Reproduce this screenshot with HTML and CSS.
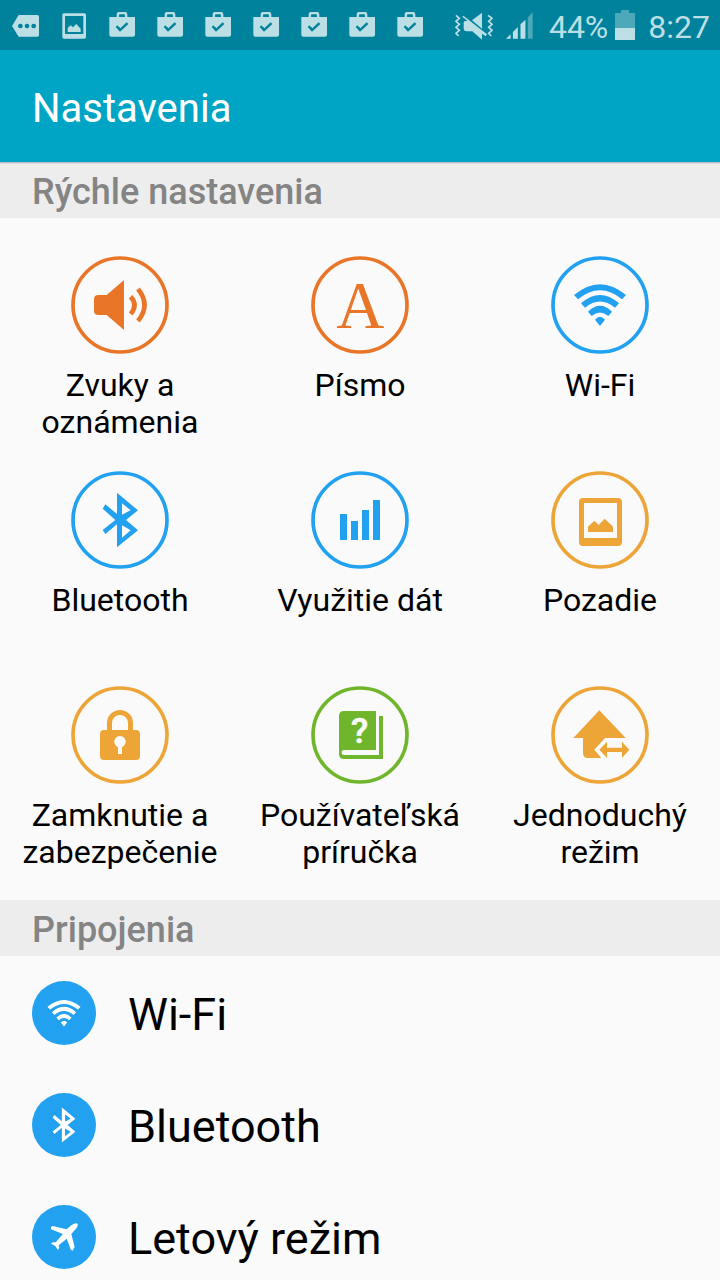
FILE: index.html
```html
<!DOCTYPE html>
<html lang="sk">
<head>
<meta charset="utf-8">
<meta name="viewport" content="width=device-width, initial-scale=1">
<title>Nastavenia</title>
<link rel="stylesheet" href="styles.css">
</head>
<body>
<svg class="symbols" aria-hidden="true">
  <symbol id="bag" viewBox="0 0 144 150">
    <path fill-rule="evenodd" d="M34 51H56V43Q56 36 63 36H81Q88 36 88 43V51H111V104Q111 110 105 110H40Q34 110 34 104ZM63 51H81V46Q81 43 78 43H66Q63 43 63 46ZM53 81L66 95L91 72L86 67L67 85L58 76Z"/>
  </symbol>
  <symbol id="wifi" viewBox="100 110 160 132">
    <path d="M102 147Q180 82 258 147L246 160Q180 106 114 160ZM123 172Q180 122 237 172L225 185Q180 148 135 185ZM144 197Q180 162 216 197L205 210Q180 189 155 210ZM165 221Q180 203 195 221L180 240Z"/>
  </symbol>
  <symbol id="bluetooth" viewBox="126 96 110 168">
    <path fill-rule="evenodd" d="M171 98L234 151L198 180L234 211L171 262V193L136 222L128 210L166 180L128 146L136 133L171 162ZM186 130V164L212 151ZM186 196V233L212 211Z"/>
  </symbol>
  <symbol id="plane" viewBox="90 755 86 92">
    <path d="M173 760Q176 765 168 776L154 792L164 832L158 843L152 839L140 806L115 826L117 834L113 841L104 828L91 822L97 817L106 817L128 792L92 777L91 771L97 767L139 777L155 764Q167 756 173 760Z"/>
  </symbol>
</svg>
<div class="screen">
  <div class="status">
    <div class="notifications">
      <svg class="note" viewBox="0 0 144 150"><path fill-rule="evenodd" d="M50 45H106Q111 45 111 50V105Q111 110 106 110H50L30 78ZM55 71a7 7 0 1 0 .1 0ZM75 71a7 7 0 1 0 .1 0ZM95 71a7 7 0 1 0 .1 0Z"/></svg>
      <svg class="note" viewBox="0 0 144 150"><path fill-rule="evenodd" d="M42 40H103Q108 40 108 45V111Q108 116 103 116H42Q37 116 37 111V45Q37 40 42 40ZM45 48V102H100V48ZM53 96V84L62 76L69 82L79 72L92 86V96Z"/></svg>
      <svg class="note"><use href="#bag"/></svg>
      <svg class="note"><use href="#bag"/></svg>
      <svg class="note"><use href="#bag"/></svg>
      <svg class="note"><use href="#bag"/></svg>
      <svg class="note"><use href="#bag"/></svg>
      <svg class="note"><use href="#bag"/></svg>
      <svg class="note"><use href="#bag"/></svg>
    </div>
    <div class="system">
      <svg class="mute" viewBox="45 0 114 150"><path d="M126 38V86L96 61ZM73 64L82 62L67 50L70 47L141 103L137 109L126 101V119L97 94H80Q71 94 71 85V68Z"/><path class="wave" d="M48 46L58 55L48 64L58 73L48 82L58 91L48 100L56 108M144 46L156 55L146 64L156 73L146 82L156 91L146 100L154 108"/></svg>
      <svg class="signal" viewBox="198 0 82 150"><path d="M198 117L212 103V117ZM219 96L234 81V117H219ZM242 73L257 59V117H242Z"/><path class="dim" d="M264 52L279 36V117H264Z"/></svg>
      <span class="percent">44%</span>
      <svg class="battery" viewBox="525 0 60 150"><path class="dim" d="M525 39H543V30H567V39H585V84H525Z"/><path d="M525 84H585V120H525Z"/></svg>
      <span class="clock">8:27</span>
    </div>
  </div>
  <header class="bar"><h1 class="title">Nastavenia</h1></header>
  <main class="content">
    <h2 class="section section-first">Rýchle nastavenia</h2>
    <nav class="grid">
      <a class="tile orange" href="#sounds">
        <svg class="ring" viewBox="33 30 294 294"><circle class="outline" cx="180" cy="177" r="141"/><path d="M115 147H140L192 102V252L140 207H115Q102 207 102 194V160Q102 147 115 147Z"/><path class="arc" d="M212 152Q235 178 212 204M234 129Q273 177 234 225"/></svg>
        <span>Zvuky a oznámenia</span>
      </a>
      <a class="tile orange" href="#font">
        <svg class="ring" viewBox="33 30 294 294"><circle class="outline" cx="180" cy="177" r="141"/><text class="letter" x="181" y="246" aria-hidden="true">A</text></svg>
        <span>Písmo</span>
      </a>
      <a class="tile blue" href="#wifi-settings">
        <svg class="ring" viewBox="33 30 294 294"><circle class="outline" cx="180" cy="177" r="141"/><use href="#wifi" x="100" y="110" width="160" height="132"/></svg>
        <span>Wi-Fi</span>
      </a>
      <a class="tile blue" href="#bluetooth-settings">
        <svg class="ring" viewBox="33 33 294 294"><circle class="outline" cx="180" cy="180" r="141"/><use href="#bluetooth" x="126" y="96" width="110" height="168"/></svg>
        <span>Bluetooth</span>
      </a>
      <a class="tile blue" href="#data">
        <svg class="ring" viewBox="33 33 294 294"><circle class="outline" cx="180" cy="180" r="141"/><path d="M120 162H141V240H120ZM153 183H174V240H153ZM186 150H207V240H186ZM219 120H240V240H219Z"/></svg>
        <span>Využitie dát</span>
      </a>
      <a class="tile amber" href="#wallpaper">
        <svg class="ring" viewBox="33 33 294 294"><circle class="outline" cx="180" cy="180" r="141"/><path fill-rule="evenodd" d="M129 114H234Q246 114 246 126V246Q246 258 234 258H129Q117 258 117 246V126Q117 114 129 114ZM132 129V234H231V129ZM144 216V200L163 182L176 195L194 176L219 200V216Z"/></svg>
        <span>Pozadie</span>
      </a>
      <a class="tile amber" href="#lock">
        <svg class="ring" viewBox="33 30 294 294"><circle class="outline" cx="180" cy="177" r="141"/><path fill-rule="evenodd" d="M141 162V141A39 39 0 0 1 219 141V162H228Q240 162 240 174V240Q240 252 228 252H132Q120 252 120 240V174Q120 162 132 162ZM156 162H204V141A24 24 0 0 0 156 141ZM174 213V234H186V213A17 17 0 1 0 174 213Z"/></svg>
        <span>Zamknutie a zabezpečenie</span>
      </a>
      <a class="tile green" href="#manual">
        <svg class="ring" viewBox="33 30 294 294"><circle class="outline" cx="180" cy="177" r="141"/><path d="M132 105H228V222H133Q125 222 125 229.500T133 237H237V120H249V249H132Q117 249 117 234V120Q117 105 132 105Z"/><text class="question" x="179" y="201" aria-hidden="true">?</text></svg>
        <span>Používateľská príručka</span>
      </a>
      <a class="tile amber" href="#easy">
        <svg class="ring" viewBox="33 30 294 294"><circle class="outline" cx="180" cy="177" r="141"/><path d="M178 103L257 186H195L163 221L184 246H144Q129 246 129 231V186H100ZM178 221L201 197V215H246V197L268 221L246 246V228H201V246Z"/></svg>
        <span>Jednoduchý režim</span>
      </a>
    </nav>
    <h2 class="section">Pripojenia</h2>
    <nav class="list">
      <a class="row" href="#wifi-settings"><span class="disc"><svg class="disc-wifi"><use href="#wifi"/></svg></span><span class="name">Wi-Fi</span></a>
      <a class="row" href="#bluetooth-settings"><span class="disc"><svg class="disc-bluetooth"><use href="#bluetooth"/></svg></span><span class="name">Bluetooth</span></a>
      <a class="row" href="#airplane"><span class="disc"><svg class="disc-plane"><use href="#plane"/></svg></span><span class="name">Letový režim</span></a>
    </nav>
  </main>
</div>
</body>
</html>
```

FILE: styles.css
```css
* {
  box-sizing: border-box;
}

body {
  margin: 0;
  background: #fafafa;
  color: #000;
  font-family: Roboto, "Noto Sans", sans-serif;
}

.symbols {
  display: none;
}

.screen {
  display: flex;
  flex-direction: column;
  height: 100vh;
}

.status {
  display: flex;
  flex: none;
  justify-content: space-between;
  height: 50px;
  padding: 0 10px 0 2px;
  background: #00829c;
  color: #bcdfe6;
  fill: #bcdfe6;
  font-size: 32px;
  line-height: 54px;
}

.notifications,
.system {
  display: flex;
}

.note {
  width: 48px;
  height: 50px;
}

.mute {
  width: 38px;
  height: 50px;
  margin-right: 13px;
}

.wave {
  fill: none;
  stroke: #bcdfe6;
  stroke-width: 5;
}

.signal {
  width: 27px;
  height: 50px;
  margin-right: 16px;
}

.dim {
  fill: #4da8ba;
}

.battery {
  width: 20px;
  height: 50px;
  margin: 0 13px 0 7px;
}

.bar {
  display: flex;
  flex: none;
  align-items: center;
  height: 112px;
  padding: 5px 32px 0;
  background: #00a5c5;
}

.title {
  margin: 0;
  color: #fff;
  font-size: 40px;
  font-weight: 400;
}

.content {
  flex: 1;
  min-height: 0;
  overflow-y: auto;
  scrollbar-width: none;
}

.section {
  height: 56px;
  margin: 0;
  padding: 0 32px;
  background: #ededed;
  color: #848484;
  font-size: 36px;
  font-weight: 500;
  line-height: 60px;
}

.section-first {
  box-shadow: inset 0 1px #b5bfc2, inset 0 2px #dedede;
}

.grid {
  display: grid;
  grid-template-columns: repeat(3, 1fr);
  row-gap: 30px;
  padding: 38px 0 29px;
}

.tile {
  display: flex;
  flex-direction: column;
  align-items: center;
  gap: 13px;
  min-height: 185px;
  padding: 0 16px;
  color: #000;
  font-size: 32px;
  line-height: 37px;
  text-align: center;
  text-decoration: none;
}

.ring {
  flex: none;
  width: 98px;
  height: 98px;
}

.outline,
.arc {
  fill: none;
  stroke-width: 11;
}

.arc {
  stroke-width: 14;
}

.orange .ring {
  fill: #e97528;
}

.orange .outline,
.orange .arc {
  stroke: #e97528;
}

.blue .ring {
  fill: #21a1ef;
}

.blue .outline {
  stroke: #21a1ef;
}

.amber .ring {
  fill: #eca536;
}

.amber .outline {
  stroke: #eca536;
}

.green .ring {
  fill: #70b62c;
}

.green .outline {
  stroke: #70b62c;
}

.letter {
  font-family: "Liberation Serif", serif;
  font-size: 200px;
  text-anchor: middle;
}

.question {
  fill: #fafafa;
  font-size: 106px;
  font-weight: 500;
  stroke: #fafafa;
  stroke-width: 2;
  text-anchor: middle;
}

.list {
  padding-top: 1px;
}

.row {
  display: flex;
  align-items: center;
  gap: 32px;
  height: 112px;
  padding: 0 32px;
  color: #000;
  font-size: 45px;
  line-height: 56px;
  text-decoration: none;
}

.name {
  padding-top: 4px;
}

.disc {
  display: flex;
  flex: none;
  align-items: center;
  justify-content: center;
  width: 64px;
  height: 64px;
  border-radius: 50%;
  background: #21a1ef;
  fill: #fff;
}

.disc-wifi {
  width: 34px;
  height: 28px;
}

.disc-bluetooth {
  width: 24px;
  height: 36px;
}

.disc-plane {
  width: 29px;
  height: 30px;
}
```
